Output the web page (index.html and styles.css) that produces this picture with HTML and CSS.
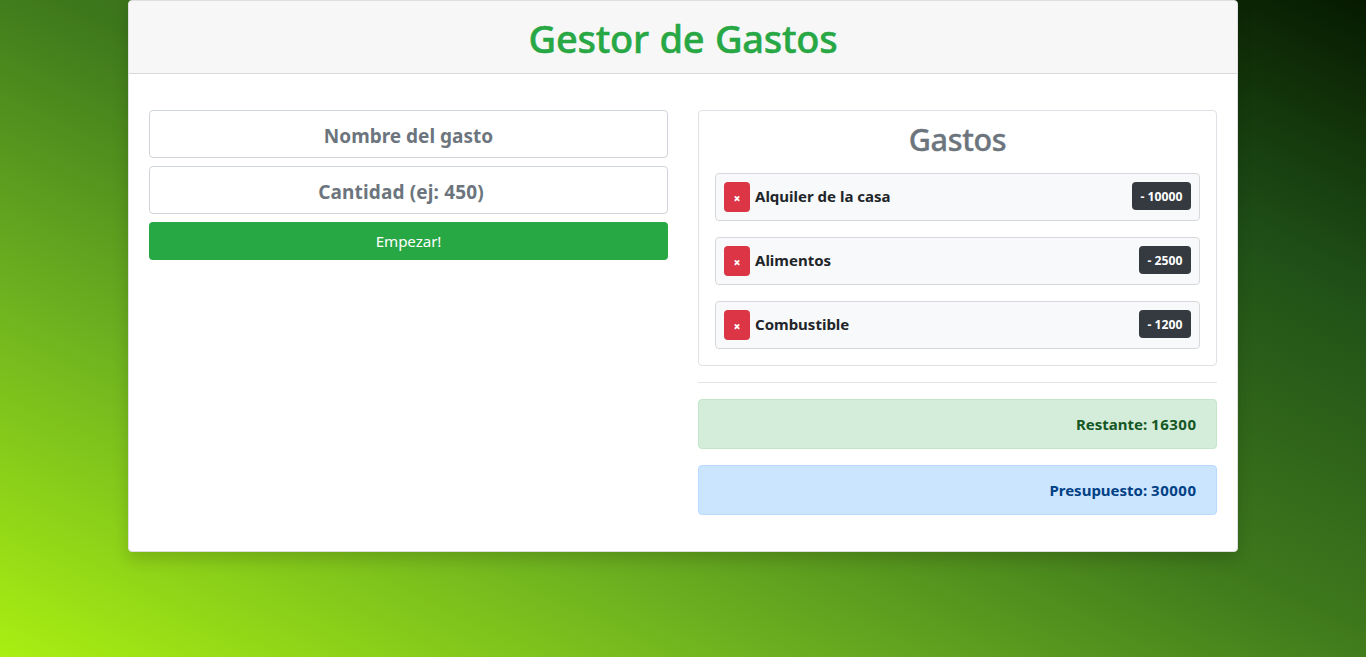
FILE: index.html
```html
<!DOCTYPE html>
<html lang="es">
<head>
<meta charset="utf-8">
<title>Gestor de Gastos</title>
<link rel="stylesheet" href="styles.css">
</head>
<body>
<main class="card">
  <header class="card-header"><h1>Gestor de Gastos</h1></header>
  <div class="card-body">
    <form class="form">
      <div class="control">Nombre del gasto</div>
      <div class="control amount">Cantidad (ej: 450)</div>
      <button class="submit" type="button">Empezar!</button>
    </form>
    <section class="summary">
      <div class="expenses">
        <h2>Gastos</h2>
        <div class="item"><button class="remove" type="button">×</button><span class="label">Alquiler de la casa</span><span class="badge wide">- 10000</span></div>
        <div class="item"><button class="remove" type="button">×</button><span class="label">Alimentos</span><span class="badge">- 2500</span></div>
        <div class="item"><button class="remove" type="button">×</button><span class="label">Combustible</span><span class="badge">- 1200</span></div>
      </div>
      <hr>
      <div class="alert success">Restante: <span class="value">16300</span></div>
      <div class="alert primary">Presupuesto: <span class="value">30000</span></div>
    </section>
  </div>
</main>
</body>
</html>
```
FILE: styles.css
```css
* { box-sizing: border-box; }
html { height: 100%; }
body {
  margin: 0;
  min-height: 657px;
  font: 400 16px/24px "Segoe UI", "Noto Sans", sans-serif;
  color: #212529;
  background: linear-gradient(to top right, #a9ef12 0%, #6db120 28%, #3e781c 52%, #1f4f17 78%, #12330a 90%, #061a00 100%);
}
h1, h2 { margin: 0; font-weight: 500; }
button { font-family: inherit; border: 0; padding: 0; color: #fff; }
.card {
  width: 1110px;
  height: 552px;
  margin: 0 auto;
  background: #fff;
  border: 1px solid #dfdfdf;
  border-radius: 4px;
  box-shadow: 0 8px 16px rgba(0, 0, 0, .15);
}
.card-header {
  height: 73px;
  padding-top: 12px;
  text-align: center;
  color: #28a745;
  background: #f7f7f7;
  border-bottom: 1px solid #d8d8d8;
  border-radius: 3px 3px 0 0;
}
h1 { font-size: 38px; line-height: 50px; letter-spacing: -.25px; word-spacing: 1px; -webkit-text-stroke: .5px; }
.card-body {
  display: grid;
  grid-template-columns: 519px 519px;
  gap: 30px;
  padding: 36px 20px;
}
.form { display: flex; flex-direction: column; gap: 8px; }
.control {
  height: 48px;
  border: 1px solid #ced4da;
  border-radius: 4px;
  font-size: 19px;
  line-height: 50px;
  font-weight: 700;
  text-align: center;
  color: #6c757d;
}
.amount { padding-right: 15px; letter-spacing: .15px; }
.submit { height: 38px; padding-bottom: 1px; background: #28a745; border-radius: 4px; font-size: 15.2px; letter-spacing: -.1px; }
.expenses {
  height: 256px;
  padding: 16px;
  border: 1px solid #dee2e6;
  border-radius: 4px;
}
h2 { height: 46px; font-size: 30.5px; line-height: 25px; letter-spacing: -.35px; text-align: center; color: #6c757d; -webkit-text-stroke: .4px; }
.item {
  display: flex;
  align-items: center;
  height: 48px;
  padding: 0 8px;
  margin-bottom: 16px;
  background: #f8f9fa;
  border: 1px solid #d6d8db;
  border-radius: 4px;
}
.remove { width: 26px; height: 30px; background: #dc3545; border-radius: 4px; font-size: 12px; font-weight: 900; padding-top: 2px; }
.label { margin: 0 0 3px 5px; font-size: 15px; font-weight: 700; }
.badge {
  width: 52px;
  height: 28px;
  margin: 0 0 2px auto;
  border-radius: 4px;
  background: #343a40;
  color: #fff;
  font-size: 12.2px;
  line-height: 29px;
  font-weight: 700;
  text-align: center;
  white-space: nowrap;
}
.badge.wide { width: 59px; }
hr { height: 1px; margin: 16px 0; border: 0; background: #e5e5e5; }
.alert {
  height: 50px;
  padding: 0 20px;
  margin-bottom: 16px;
  border: 1px solid;
  border-radius: 4px;
  font-size: 15px;
  line-height: 48px;
  font-weight: 700;
  text-align: right;
}
.value { letter-spacing: .5px; margin-right: -.5px; }
.success { color: #155724; background: #d4edda; border-color: #c3e6cb; }
.primary { color: #004085; background: #cce5ff; border-color: #b8daff; }
```
